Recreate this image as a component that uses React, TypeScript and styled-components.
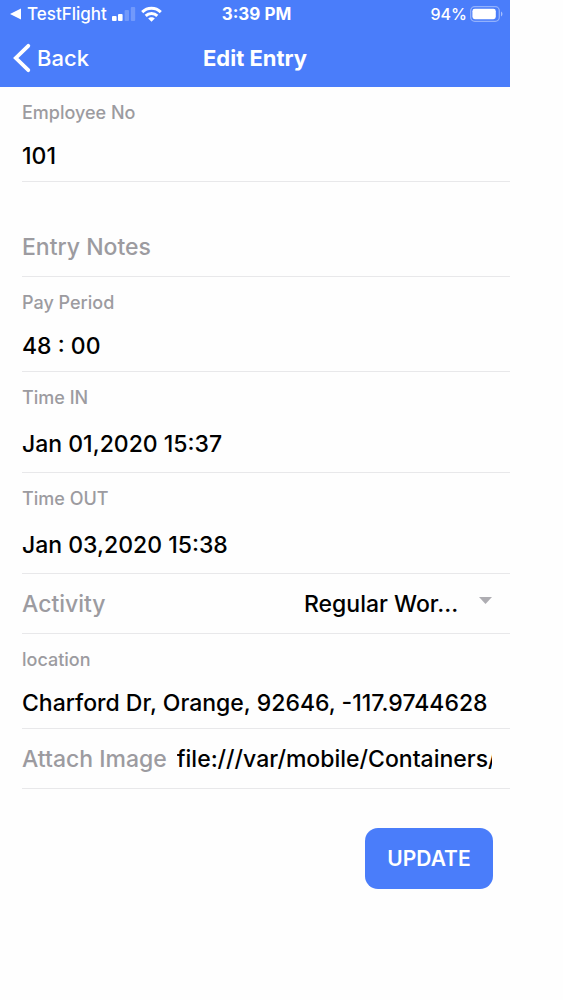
import React from "react";
import styled, { createGlobalStyle } from "styled-components";

const blue = "#4a7dfa";
const grey = "#9c9ba0";
const line = "#e8e8ea";

const GlobalStyle = createGlobalStyle`
  *, *::before, *::after { box-sizing: border-box; }
  body {
    margin: 0;
    background: #fefefe;
    color: #000;
    font-family: Inter, "Liberation Sans", sans-serif;
    font-weight: 500;
  }
  button, input, select { font: inherit; color: inherit; }
`;

const Page = styled.main`
  min-height: 100vh;
  padding-right: 53px;
`;

const Header = styled.header`
  background: ${blue};
  color: #fff;
`;

const Bar = styled.div<{ $height: number; $inset: string }>`
  display: grid;
  grid-template-columns: 1fr auto 1fr;
  align-items: center;
  height: ${(p) => p.$height}px;
  padding: ${(p) => p.$inset};
`;

const StatusGroup = styled.div<{ $end?: boolean }>`
  display: flex;
  align-items: center;
  justify-content: ${(p) => (p.$end ? "flex-end" : "flex-start")};
  gap: ${(p) => (p.$end ? 3 : 5)}px;
  font-size: ${(p) => (p.$end ? 16 : 17)}px;
  line-height: 20px;
`;

const Clock = styled.time`
  font-size: 17px;
  line-height: 20px;
  font-weight: 700;
`;

const BackButton = styled.button`
  display: flex;
  align-items: center;
  gap: 6px;
  justify-self: start;
  padding: 0;
  border: 0;
  background: none;
  font-size: 22px;
  line-height: 32px;
  cursor: pointer;
`;

const Title = styled.h1`
  margin: 0;
  font-size: 22px;
  line-height: 32px;
  font-weight: 700;
`;

const Form = styled.form`
  padding-left: 22px;
`;

const StackedRow = styled.div`
  display: flex;
  flex-direction: column;
  padding: 14px 22px 0 0;
  border-bottom: 1px solid ${line};
`;

const SmallLabel = styled.label`
  color: ${grey};
  font-size: 18px;
  line-height: 24px;
`;

const Input = styled.input<{ $height: number }>`
  flex: 1 1 auto;
  width: 100%;
  min-width: 0;
  height: ${(p) => p.$height}px;
  padding: 0;
  border: 0;
  outline: 0;
  background: none;
  font-size: 23px;
  &::placeholder {
    color: ${grey};
    opacity: 1;
  }
`;

const StackedInput = styled(Input)`
  flex: none;
  margin-top: 5px;
`;

const NotesRow = styled.div`
  padding: 36px 22px 0 0;
  border-bottom: 1px solid ${line};
`;

const InlineRow = styled.div`
  display: flex;
  align-items: center;
  gap: 10px;
  height: 60px;
  padding-right: 18px;
  border-bottom: 1px solid ${line};
`;

const InlineLabel = styled.label`
  flex: none;
  color: ${grey};
  font-size: 23px;
  line-height: 32px;
`;

const SelectWrap = styled.div`
  display: flex;
  align-items: center;
  gap: 20px;
  margin-left: auto;
`;

const Select = styled.select`
  appearance: none;
  padding: 0;
  border: 0;
  outline: 0;
  background: none;
  font-size: 23px;
  line-height: 32px;
`;

const Caret = styled.svg`
  display: block;
  margin-bottom: 6px;
`;

const Actions = styled.div`
  display: flex;
  justify-content: flex-end;
  padding: 39px 17px 0 0;
`;

const UpdateButton = styled.button`
  width: 128px;
  height: 61px;
  padding: 0;
  border: 0;
  border-radius: 13px;
  background: ${blue};
  color: #fff;
  font-size: 21px;
  font-weight: 600;
  cursor: pointer;
`;

type FieldProps = { id: string; label: string; value: string; height?: number };

const Field = ({ id, label, value, height = 51 }: FieldProps) => (
  <StackedRow>
    <SmallLabel htmlFor={id}>{label}</SmallLabel>
    <StackedInput id={id} defaultValue={value} $height={height} />
  </StackedRow>
);

const SignalIcon = () => (
  <svg width="24" height="16" viewBox="0 0 24 16" fill="#fff" aria-hidden="true">
    <rect x="0" y="10" width="4.6" height="5" rx="1" />
    <rect x="6" y="8" width="4.6" height="7" rx="1" />
    <rect x="12.6" y="4" width="4.4" height="11" rx="1" opacity="0.22" />
    <rect x="18.8" y="1" width="4.4" height="14" rx="1" opacity="0.22" />
  </svg>
);

const WifiIcon = () => (
  <svg width="21" height="16" viewBox="0 0 21 16" fill="none" stroke="#fff" strokeWidth="2.9" aria-hidden="true">
    <path d="M1.2 6.1C6.4.9 14.6.9 19.8 6.1" />
    <path d="M4.7 9.9c3.2-3.2 8.4-3.2 11.6 0" />
    <path d="M10.5 15.8 7.2 12.5c1.8-1.8 4.8-1.8 6.6 0z" fill="#fff" stroke="none" />
  </svg>
);

const BatteryIcon = () => (
  <svg width="33" height="16" viewBox="0 0 33 16" aria-hidden="true">
    <rect x="0.7" y="0.7" width="28.6" height="14.6" rx="4" fill="none" stroke="#fff" strokeOpacity="0.4" strokeWidth="1.3" />
    <rect x="2.4" y="2.8" width="23.4" height="10.4" rx="2.4" fill="#fff" />
    <path d="M31 5.5c1.9.7 1.9 4.3 0 5z" fill="#fff" fillOpacity="0.5" />
  </svg>
);

export default function App() {
  return (
    <>
      <GlobalStyle />
      <Page>
        <Header>
          <Bar $height={28} $inset="0 7px 0 10px">
            <StatusGroup>
              <svg width="12" height="12" viewBox="0 0 12 12" fill="#fff" aria-hidden="true">
                <path d="M0 6 11 .6v10.8z" />
              </svg>
              <span>TestFlight</span>
              <SignalIcon />
              <WifiIcon />
            </StatusGroup>
            <Clock>3:39 PM</Clock>
            <StatusGroup $end>
              <span>94%</span>
              <BatteryIcon />
            </StatusGroup>
          </Bar>
          <Bar $height={59} $inset="0 13px">
            <BackButton type="button">
              <svg width="18" height="30" viewBox="0 0 18 30" fill="none" stroke="#fff" strokeWidth="3.8" aria-hidden="true">
                <path d="M15.3 2.8 2.8 15l12.5 12.2" strokeLinecap="round" strokeLinejoin="miter" />
              </svg>
              Back
            </BackButton>
            <Title>Edit Entry</Title>
          </Bar>
        </Header>
        <Form onSubmit={(e) => e.preventDefault()}>
          <Field id="employee" label="Employee No" value="101" />
          <NotesRow>
            <Input $height={58} aria-label="Entry Notes" placeholder="Entry Notes" />
          </NotesRow>
          <Field id="period" label="Pay Period" value="48 : 00" />
          <Field id="time-in" label="Time IN" value="Jan 01,2020 15:37" height={57} />
          <Field id="time-out" label="Time OUT" value="Jan 03,2020 15:38" height={57} />
          <InlineRow>
            <InlineLabel htmlFor="activity">Activity</InlineLabel>
            <SelectWrap>
              <Select id="activity">
                <option>Regular Wor...</option>
              </Select>
              <Caret width="13" height="7" viewBox="0 0 13 7" fill="#aeadb2" aria-hidden="true">
                <path d="M0 0h13L6.5 7z" />
              </Caret>
            </SelectWrap>
          </InlineRow>
          <Field id="location" label="location" value="Charford Dr, Orange, 92646, -117.9744628" />
          <InlineRow>
            <InlineLabel htmlFor="image">Attach Image</InlineLabel>
            <Input id="image" $height={58} defaultValue="file:///var/mobile/Containers/" />
          </InlineRow>
          <Actions>
            <UpdateButton type="submit">UPDATE</UpdateButton>
          </Actions>
        </Form>
      </Page>
    </>
  );
}
